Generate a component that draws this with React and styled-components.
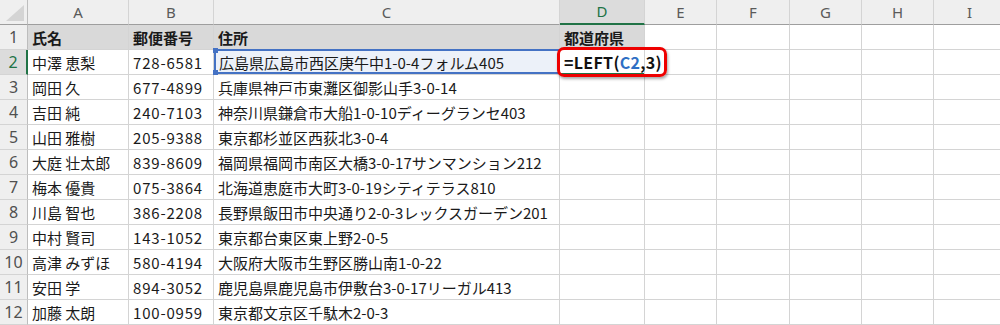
import React from 'react'
import styled, { createGlobalStyle } from 'styled-components'

const GlobalStyle = createGlobalStyle`
  html, body {
    margin: 0;
    padding: 0;
    background: #ffffff;
    overflow: hidden;
  }
`

const COLS = ['A', 'B', 'C', 'D', 'E', 'F', 'G', 'H', 'I']
const WIDTHS = [28, 101, 85, 346, 85, 72, 73, 72, 72, 72]

const rows = [
  ['氏名', '郵便番号', '住所', '都道府県'],
  ['中澤 恵梨', '728-6581', '広島県広島市西区庚午中1-0-4フォルム405'],
  ['岡田 久', '677-4899', '兵庫県神戸市東灘区御影山手3-0-14'],
  ['吉田 純', '240-7103', '神奈川県鎌倉市大船1-0-10ディーグランセ403'],
  ['山田 雅樹', '205-9388', '東京都杉並区西荻北3-0-4'],
  ['大庭 壮太郎', '839-8609', '福岡県福岡市南区大橋3-0-17サンマンション212'],
  ['梅本 優貴', '075-3864', '北海道恵庭市大町3-0-19シティテラス810'],
  ['川島 智也', '386-2208', '長野県飯田市中央通り2-0-3レックスガーデン201'],
  ['中村 賢司', '143-1052', '東京都台東区東上野2-0-5'],
  ['高津 みずほ', '580-4194', '大阪府大阪市生野区勝山南1-0-22'],
  ['安田 学', '894-3052', '鹿児島県鹿児島市伊敷台3-0-17リーガル413'],
  ['加藤 太朗', '100-0959', '東京都文京区千駄木2-0-3'],
]

const Sheet = styled.div`
  display: grid;
  grid-template-columns: ${WIDTHS.map((w) => w + 'px').join(' ')};
  grid-auto-rows: 25px;
  width: 1000px;
  height: 325px;
  overflow: hidden;
  font-family: "Noto Sans CJK JP", "Noto Sans", sans-serif;
`

const Corner = styled.div`
  display: flex;
  align-items: flex-end;
  justify-content: flex-end;
  padding: 3px;
  background: #efefef;
  border-right: 1px solid #bdbdbd;
  border-bottom: 1px solid #9e9e9e;
  box-sizing: border-box;
`

const ColHead = styled.div`
  display: flex;
  align-items: center;
  justify-content: center;
  box-sizing: border-box;
  background: ${(p) => (p.$active ? '#dcdcdc' : '#efefef')};
  border-right: 1px solid #d4d4d4;
  border-bottom: ${(p) => (p.$active ? '2px solid #217346' : '1px solid #9e9e9e')};
  color: ${(p) => (p.$active ? '#217346' : '#5a5a5a')};
  font-family: "Noto Sans", sans-serif;
  font-size: 15px;
  padding-bottom: 1px;
`

const RowHead = styled.div`
  display: flex;
  align-items: center;
  justify-content: center;
  box-sizing: border-box;
  background: ${(p) => (p.$active ? '#dcdcdc' : '#efefef')};
  border-right: ${(p) => (p.$active ? '2px solid #217346' : '1px solid #bdbdbd')};
  border-bottom: 1px solid #d4d4d4;
  color: ${(p) => (p.$active ? '#217346' : '#505050')};
  font-family: "Noto Sans", sans-serif;
  font-size: 16px;
`

const Cell = styled.div`
  position: relative;
  display: flex;
  align-items: center;
  box-sizing: border-box;
  padding-left: 4px;
  white-space: nowrap;
  background: ${(p) => (p.$title ? '#d9d9d9' : '#ffffff')};
  border-right: 1px solid #d4d4d4;
  border-bottom: 1px solid #d4d4d4;
  color: #1a1a1a;
  font-size: 15px;
  font-weight: ${(p) => (p.$title ? 700 : 400)};
  letter-spacing: ${(p) => (p.$code ? '0.8px' : '0')};
`

const RefRange = styled.div`
  position: absolute;
  inset: -1px -1px 0 0;
  border: 2px solid #4472c4;
  background: rgba(68, 114, 196, 0.1);
  pointer-events: none;
`

const Handle = styled.span`
  position: absolute;
  width: 5px;
  height: 5px;
  background: #4472c4;
  left: -3px;
  top: ${(p) => (p.$bottom ? 'auto' : '-3px')};
  bottom: ${(p) => (p.$bottom ? '-3px' : 'auto')};
`

const Address = styled.span`
  position: relative;
  padding-left: 1px;
`

const ActiveCell = styled(Cell)`
  overflow: visible;
  &::after {
    content: '';
    position: absolute;
    left: 0;
    right: 0;
    bottom: -1px;
    height: 2px;
    background: #217346;
  }
`

const Callout = styled.div`
  position: absolute;
  left: -3px;
  top: -3px;
  width: 110px;
  height: 30px;
  box-sizing: border-box;
  border: 3px solid #ee0000;
  border-radius: 7px;
  box-shadow: 1px 2px 3px rgba(0, 0, 0, 0.35);
  z-index: 2;
`

const Formula = styled.span`
  position: relative;
  z-index: 3;
  font-weight: 700;
  font-size: 16px;
  letter-spacing: 0.3px;
  color: #111111;
`

const Ref = styled.span`
  color: #2f6fc4;
`

export default function App() {
  return (
    <>
      <GlobalStyle />
      <Sheet>
        <Corner>
          <svg width="18" height="16" viewBox="0 0 18 16">
            <polygon points="18,0 18,16 0,16" fill="#d4d4d4" />
          </svg>
        </Corner>
        {COLS.map((c) => (
          <ColHead key={c} $active={c === 'D'}>{c}</ColHead>
        ))}

        {rows.map((row, i) => {
          const n = i + 1
          return (
            <React.Fragment key={n}>
              <RowHead $active={n === 2}>{n}</RowHead>
              {COLS.map((c, j) => {
                const text = row[j] || ''
                if (n === 2 && c === 'C') {
                  return (
                    <Cell key={c}>
                      <RefRange>
                        <Handle />
                        <Handle $bottom />
                      </RefRange>
                      <Address>{text}</Address>
                    </Cell>
                  )
                }
                if (n === 2 && c === 'D') {
                  return (
                    <ActiveCell key={c}>
                      <Callout />
                      <Formula>
                        =LEFT(<Ref>C2</Ref>,3)
                      </Formula>
                    </ActiveCell>
                  )
                }
                return (
                  <Cell key={c} $title={n === 1 && j < 4} $code={n > 1 && c === 'B'}>
                    {text}
                  </Cell>
                )
              })}
            </React.Fragment>
          )
        })}
      </Sheet>
    </>
  )
}
